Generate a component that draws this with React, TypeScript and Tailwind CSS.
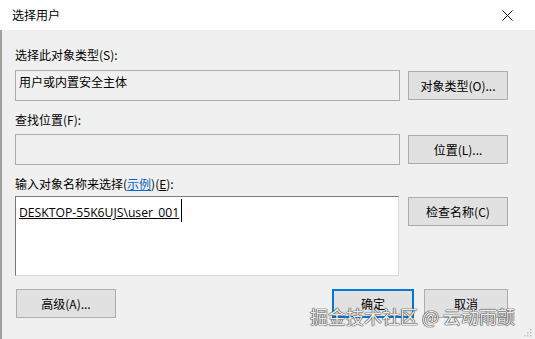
const font = "font-['Microsoft_YaHei_UI','Noto_Sans_CJK_SC',sans-serif]"

function DlgButton({ label, primary = false, className = '' }: { label: React.ReactNode; primary?: boolean; className?: string }) {
  return (
    <button
      type="button"
      className={`flex h-[29px] items-center justify-center bg-[#e1e1e1] text-[12px] text-black ${
        primary ? 'border-2 border-[#0078d7]' : 'border border-[#adadad]'
      } ${className}`}
    >
      {label}
    </button>
  )
}

export default function App() {
  return (
    <div className={`relative flex h-[339px] w-[535px] flex-col overflow-hidden bg-[#f0f0f0] ${font} text-[12px] text-black`}>
      <div className="flex h-[30px] shrink-0 items-center justify-between bg-white pl-[12px] pr-[22px]">
        <span className="text-[12px]">选择用户</span>
        <svg width="11" height="11" viewBox="0 0 11 11">
          <path d="M0.5 0.5 L10.5 10.5 M10.5 0.5 L0.5 10.5" stroke="#111" strokeWidth="1" />
        </svg>
      </div>

      <div className="flex flex-1 flex-col border-l-2 border-[#a0a0a0] pl-[13px] pr-[27px]">
        <div className="mt-[17px] h-[16px] leading-[16px]">选择此对象类型(S):</div>
        <div className="mt-[7px] flex items-center justify-between">
          <div className="flex h-[31px] w-[385px] items-start border border-[#adadad] bg-[#f0f0f0] px-[3px] pt-[2px]">
            用户或内置安全主体
          </div>
          <DlgButton label="对象类型(O)..." className="w-[100px]" />
        </div>

        <div className="mt-[11px] h-[16px] leading-[16px]">查找位置(F):</div>
        <div className="mt-[6px] flex items-center justify-between">
          <div className="h-[31px] w-[385px] border border-[#adadad] bg-[#f0f0f0]" />
          <DlgButton label="位置(L)..." className="w-[100px]" />
        </div>

        <div className="mt-[11px] h-[16px] leading-[16px]">
          输入对象名称来选择(<span className="text-[#0066cc] underline">示例</span>)(<span className="underline">E</span>):
        </div>
        <div className="mt-[4px] flex items-start justify-between">
          <div className="flex h-[80px] w-[384px] items-start border border-t-[#7a7a7a] border-l-[#7a7a7a] border-r-[#d9d9d9] border-b-[#d9d9d9] bg-white pl-[3px] pt-[2px]">
            <span className="mt-[6px] font-['Open_Sans','Noto_Sans',sans-serif] text-[12.2px] leading-[16px] underline">
              DESKTOP-55K6UJS\user_001
            </span>
            <span className="ml-[2px] inline-block h-[23px] w-px bg-black" />
          </div>
          <DlgButton label="检查名称(C)" className="mt-px w-[100px]" />
        </div>

        <div className="mt-[13px] flex items-center">
          <DlgButton label="高级(A)..." className="ml-px w-[100px]" />
          <div className="flex-1" />
          <DlgButton label="确定" primary className="w-[82px]" />
          <DlgButton label="取消" className="ml-[10px] w-[84px]" />
        </div>
      </div>

      <div className="pointer-events-none absolute left-[310px] top-[304px] text-[18px] leading-[24px] text-[#ececec] [text-shadow:0_0_1px_#333,0_0_1px_#333,0_0_1px_#555]">
        掘金技术社区 @ 云动雨颤
      </div>

      <svg className="absolute bottom-[2px] right-[3px]" width="9" height="9" viewBox="0 0 9 9">
        <rect x="7" y="1" width="1.5" height="1.5" fill="#bbb" />
        <rect x="4" y="4" width="1.5" height="1.5" fill="#bbb" />
        <rect x="7" y="4" width="1.5" height="1.5" fill="#bbb" />
        <rect x="1" y="7" width="1.5" height="1.5" fill="#bbb" />
        <rect x="4" y="7" width="1.5" height="1.5" fill="#bbb" />
        <rect x="7" y="7" width="1.5" height="1.5" fill="#bbb" />
      </svg>
    </div>
  )
}
